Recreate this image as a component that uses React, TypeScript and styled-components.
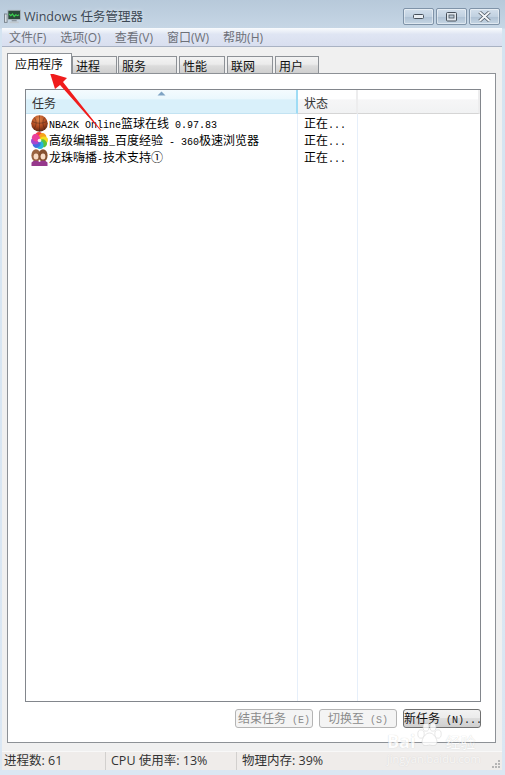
import React from "react";
import styled, { createGlobalStyle } from "styled-components";

const CJK = `"Noto Sans CJK SC", sans-serif`;
const UI = `"Open Sans", "Noto Sans CJK SC", sans-serif`;
const MONO = `"Liberation Mono", monospace`;

const GlobalStyle = createGlobalStyle`
  html, body { margin: 0; padding: 0; background: #d5e3f0; }
  * { box-sizing: border-box; }
`;

const Frame = styled.div`
  position: relative;
  width: 505px;
  height: 775px;
  overflow: hidden;
  display: flex;
  flex-direction: column;
  background: linear-gradient(180deg, #b7c9da 0, #c6d6e5 28px, #d5e4f1 29px, #dbe7f3 100%);
  font-family: ${UI};
`;

const TitleBar = styled.div`
  height: 28px;
  flex: none;
  display: flex;
  align-items: center;
  padding: 0 5px 0 4px;
`;

const TitleText = styled.div`
  margin-left: 3px;
  margin-top: 3px;
  font-size: 12.5px;
  color: #3c4854;
  flex: 1;
  text-shadow: 0 0 4px rgba(255, 255, 255, 0.6);
`;

const Controls = styled.div`
  display: flex;
  gap: 2px;
  margin-top: 5px;
`;

const ControlButton = styled.div`
  width: 31px;
  height: 17px;
  border: 1px solid #7f93a8;
  border-radius: 2px;
  display: flex;
  align-items: center;
  justify-content: center;
  background: linear-gradient(180deg, #d3dfeb 0, #c1d1e1 50%, #adc0d3 51%, #c6d6e4 100%);
  box-shadow: inset 0 0 0 1px rgba(255, 255, 255, 0.45);
`;

const Client = styled.div`
  flex: 1;
  margin: 0 3px 5px 2px;
  display: flex;
  flex-direction: column;
  background: #f0f0f0;
  min-height: 0;
`;

const MenuBar = styled.div`
  height: 19px;
  flex: none;
  display: flex;
  gap: 14px;
  padding: 1px 0 0 7px;
  background: linear-gradient(180deg, #f9fbfd 0, #dfe5f3 35%, #d9dfef 100%);
  border-bottom: 1px solid #a9b2c3;
  font-size: 12px;
  color: #6d7078;
`;

const MenuItem = styled.span`
  line-height: 17px;
  white-space: nowrap;
`;

const TabStrip = styled.div`
  height: 27px;
  flex: none;
  display: flex;
  align-items: flex-end;
  padding-left: 5px;
  position: relative;
  z-index: 1;
  margin-bottom: -1px;
`;

const Tab = styled.div<{ $active?: boolean; $width: number; $gap?: number }>`
  width: ${(p) => p.$width}px;
  margin-right: ${(p) => p.$gap ?? 2}px;
  height: ${(p) => (p.$active ? 21 : 18)}px;
  border: 1px solid #8d9196;
  border-bottom: ${(p) => (p.$active ? "none" : "1px solid #8d9196")};
  background: ${(p) =>
    p.$active ? "#fff" : "linear-gradient(180deg, #f3f3f3 0, #ebebeb 45%, #dcdcdc 55%, #cfcfcf 100%)"};
  font-family: ${CJK};
  font-size: 12px;
  line-height: ${(p) => (p.$active ? 19 : 17)}px;
  padding-left: ${(p) => (p.$active ? 7 : 3)}px;
  color: #111;
  white-space: nowrap;
`;

const Panel = styled.div`
  flex: 1;
  margin: 0 6px 8px 5px;
  border: 1px solid #8d9196;
  background: #fff;
  display: flex;
  flex-direction: column;
  padding: 15px 14px 14px 17px;
  min-height: 0;
`;

const TaskList = styled.div`
  flex: 1;
  border: 1px solid #82868c;
  display: flex;
  padding-right: 1px;
  min-height: 0;
`;

const Column = styled.div<{ $width?: number; $grow?: boolean }>`
  width: ${(p) => (p.$width ? `${p.$width}px` : "auto")};
  flex: ${(p) => (p.$grow ? 1 : "none")};
  display: flex;
  flex-direction: column;
  border-right: ${(p) => (p.$grow ? "none" : "1px solid #e6effa")};
`;

const HeaderCell = styled.div<{ $sorted?: boolean; $pad: number }>`
  position: relative;
  height: 24px;
  flex: none;
  margin-right: -1px;
  padding: 5px 0 0 ${(p) => p.$pad}px;
  font-family: ${CJK};
  font-size: 12px;
  line-height: 16px;
  color: #333;
  background: ${(p) =>
    p.$sorted
      ? "linear-gradient(180deg, #f4fbfe 0, #eaf7fd 40%, #d9f0fa 42%, #d9f0fa 100%)"
      : "linear-gradient(180deg, #fff 0, #fff 40%, #f6f6f7 42%, #f1f2f3 100%)"};
  border-bottom: 1px solid ${(p) => (p.$sorted ? "#c3e3f2" : "#d5d5d5")};
  border-right: 2px solid ${(p) => (p.$sorted ? "#9fdcf5" : "#ededee")};
`;

const SortArrow = styled.svg`
  position: absolute;
  top: 1px;
  left: 131px;
`;

const Cell = styled.div<{ $pad: number }>`
  height: 17px;
  flex: none;
  display: flex;
  align-items: center;
  gap: 1px;
  padding-left: ${(p) => p.$pad}px;
  font-family: ${CJK};
  font-size: 12px;
  color: #000;
  white-space: pre;
`;

const CellText = styled.span`
  margin-top: -2px;
`;

const Rows = styled.div`
  padding-top: 1px;
`;

/* the latin part of the old bitmap font is half as wide as a hanzi */
const Latin = styled.span`
  font-family: ${MONO};
  font-size: 10px;
`;

const ButtonRow = styled.div`
  flex: none;
  display: flex;
  justify-content: flex-end;
  gap: 6px;
  margin-top: 7px;
`;

const ActionButton = styled.div<{ $disabled?: boolean }>`
  width: 78px;
  height: 19px;
  border: 1px solid ${(p) => (p.$disabled ? "#b4b4b4" : "#707070")};
  border-radius: 3px;
  background: ${(p) =>
    p.$disabled ? "#f4f4f4" : "linear-gradient(180deg, #f2f2f2 0, #ebebeb 48%, #dddddd 50%, #cfcfcf 100%)"};
  color: ${(p) => (p.$disabled ? "#8b8b8b" : "#111")};
  font-family: ${CJK};
  font-size: 12px;
  line-height: 15px;
  text-align: center;
  white-space: pre;
`;

const StatusBar = styled.div`
  height: 19px;
  flex: none;
  display: flex;
  background: #efecea;
  border-top: 1px solid #f8f8f8;
  font-size: 12.5px;
  line-height: 18px;
  color: #333;
`;

const StatusCell = styled.div<{ $width?: number; $pad: number }>`
  width: ${(p) => (p.$width ? `${p.$width}px` : "auto")};
  flex: ${(p) => (p.$width ? "none" : 1)};
  padding-left: ${(p) => p.$pad}px;
  border-right: ${(p) => (p.$width ? "1px solid #d2d0ce" : "none")};
  white-space: nowrap;
`;

const Grip = styled.svg`
  position: absolute;
  right: 4px;
  bottom: 6px;
`;

const Arrow = styled.svg`
  position: absolute;
  left: 45px;
  top: 68px;
  pointer-events: none;
`;

const Watermark = styled.div`
  position: absolute;
  left: 387px;
  top: 733px;
  width: 110px;
  color: #fff;
  pointer-events: none;
  text-shadow: 0 0 1px #c4c4c4;
  opacity: 0.8;
`;

const WatermarkMain = styled.div`
  display: flex;
  align-items: center;
  height: 17px;
  font-family: ${UI};
  font-weight: 700;
  font-size: 18px;
  line-height: 17px;
`;

const PawSlot = styled.svg`
  margin: -14px 1px 0 -1px;
`;

const WatermarkCjk = styled.span`
  font-family: ${CJK};
  font-size: 15px;
  font-weight: 400;
`;

const WatermarkSub = styled.div`
  font-family: ${UI};
  font-size: 11px;
  line-height: 12px;
  margin-top: 3px;
  opacity: 0.75;
`;

const IconSlot = styled.svg`
  flex: none;
`;

const TitleIcon = styled.svg`
  flex: none;
  margin-top: 4px;
`;

const AppIcon = () => (
  <TitleIcon width="17" height="15" viewBox="0 0 20 18">
    <rect x="0.5" y="6" width="3" height="10" fill="#d8dee3" stroke="#6f7a83" />
    <rect x="4.5" y="1.5" width="15" height="11" fill="#2b4a3a" stroke="#aeb7be" />
    <path d="M6 6 L8 8 L10 6 L12 9 L14 7 L16 8 L18 7" fill="none" stroke="#3bd050" strokeWidth="1.4" />
    <rect x="9" y="13" width="6" height="2" fill="#8c969e" />
    <rect x="6.5" y="15" width="11" height="2" fill="#c0c8ce" />
  </TitleIcon>
);

const Ball = () => (
  <IconSlot width="17" height="17" viewBox="0 0 17 17">
    <defs>
      <radialGradient id="ball" cx="45%" cy="25%" r="80%">
        <stop offset="0" stopColor="#e0854a" />
        <stop offset="0.55" stopColor="#b04a20" />
        <stop offset="1" stopColor="#4e2010" />
      </radialGradient>
    </defs>
    <circle cx="8.5" cy="8.5" r="8.3" fill="url(#ball)" />
    <path d="M1 6.5 Q8.5 10 16 6.5 M8.5 0.6 V16.4 M3.5 2.5 Q7 8.5 3 14 M13.5 2.5 Q10 8.5 14 14" fill="none" stroke="#3a2018" strokeWidth="0.7" opacity="0.6" />
  </IconSlot>
);

const petals = ["#f0433a", "#f7a21c", "#f5dc1f", "#59c43b", "#27b6d8", "#3f6fe0", "#a347d0", "#ea3f9a"];

const Pinwheel = () => (
  <IconSlot width="17" height="17" viewBox="0 0 17 17">
    {petals.map((color, i) => (
      <ellipse key={color} cx="8" cy="4" rx="3.6" ry="4" fill={color} transform={`rotate(${i * 45} 8.5 8.5)`} />
    ))}
    <circle cx="8.5" cy="8.5" r="1.8" fill="#f6f0f4" />
  </IconSlot>
);

const Girls = () => (
  <IconSlot width="17" height="17" viewBox="0 0 17 17">
    <ellipse cx="5" cy="6.5" rx="4.6" ry="6.2" fill="#9a6440" />
    <ellipse cx="12" cy="6.5" rx="4.6" ry="6.2" fill="#86512f" />
    <ellipse cx="5" cy="7.6" rx="2.4" ry="3" fill="#f8dcc6" />
    <ellipse cx="12" cy="7.6" rx="2.4" ry="3" fill="#f8dcc6" />
    <path d="M0.5 17 V13.5 Q2 11.5 5 11.5 Q7.5 11.5 8.5 13 Q9.5 11.5 12 11.5 Q15 11.5 16.5 13.5 V17 Z" fill="#96388c" />
  </IconSlot>
);

const Paw = () => (
  <PawSlot width="30" height="26" viewBox="0 0 30 26" fill="#fff" stroke="#cfcfcf" strokeWidth="0.6">
    <ellipse cx="7" cy="12" rx="3.2" ry="4.2" />
    <ellipse cx="12" cy="5" rx="3" ry="4.2" />
    <ellipse cx="19" cy="5" rx="3" ry="4.2" />
    <ellipse cx="24" cy="12" rx="3.2" ry="4.2" />
    <path d="M15.5 11 C11 11 8 17 8 20 C8 24 12 24 15.5 23 C19 24 23 24 23 20 C23 17 20 11 15.5 11 Z" />
  </PawSlot>
);

// splits a label so the ascii runs get the narrow latin font
const Mixed = ({ text }: { text: string }) => (
  <>
    {text.split(/([\x20-\x7e]+)/).map((part, i) =>
      i % 2 ? <Latin key={i}>{part}</Latin> : part
    )}
  </>
);

const tabs = [
  { label: "进程", width: 45, gap: 1 },
  { label: "服务", width: 59, gap: 2 },
  { label: "性能", width: 46, gap: 2 },
  { label: "联网", width: 46, gap: 2 },
  { label: "用户", width: 44, gap: 0 },
];

const menus = ["文件(F)", "选项(O)", "查看(V)", "窗口(W)", "帮助(H)"];

const tasks = [
  { icon: <Ball />, name: "NBA2K Online篮球在线 0.97.83" },
  { icon: <Pinwheel />, name: "高级编辑器_百度经验 - 360极速浏览器" },
  { icon: <Girls />, name: "龙珠嗨播-技术支持①" },
];

export default function App() {
  return (
    <Frame>
      <GlobalStyle />
      <TitleBar>
        <AppIcon />
        <TitleText>Windows 任务管理器</TitleText>
        <Controls>
          <ControlButton>
            <svg width="12" height="7" viewBox="0 0 12 7">
              <rect x="0.5" y="1.5" width="10" height="4" rx="1" fill="#e9eef3" stroke="#47505a" />
            </svg>
          </ControlButton>
          <ControlButton>
            <svg width="11" height="10" viewBox="0 0 11 10">
              <rect x="0.5" y="0.5" width="10" height="8.5" rx="1" fill="#dfe6ed" stroke="#47505a" />
              <rect x="3" y="3" width="5" height="3" fill="#b9c8d6" stroke="#47505a" strokeWidth="0.8" />
            </svg>
          </ControlButton>
          <ControlButton>
            <svg width="13" height="11" viewBox="0 0 13 11">
              <path d="M1.5 1 L11.5 10 M11.5 1 L1.5 10" stroke="#4a535d" strokeWidth="3.4" />
              <path d="M1.5 1 L11.5 10 M11.5 1 L1.5 10" stroke="#f2f5f8" strokeWidth="2" />
            </svg>
          </ControlButton>
        </Controls>
      </TitleBar>
      <Client>
        <MenuBar>
          {menus.map((m) => (
            <MenuItem key={m}>{m}</MenuItem>
          ))}
        </MenuBar>
        <TabStrip>
          <Tab $active $width={65} $gap={0}>应用程序</Tab>
          {tabs.map((t) => (
            <Tab key={t.label} $width={t.width} $gap={t.gap}>{t.label}</Tab>
          ))}
        </TabStrip>
        <Panel>
          <TaskList>
            <Column $width={272}>
              <HeaderCell $sorted $pad={6}>
                任务
                <SortArrow width="9" height="5" viewBox="0 0 9 5">
                  <path d="M0.5 4.5 L4.5 0.5 L8.5 4.5 Z" fill="#7fa3c4" />
                </SortArrow>
              </HeaderCell>
              <Rows>
                {tasks.map((t) => (
                  <Cell key={t.name} $pad={5}>
                    {t.icon}
                    <CellText><Mixed text={t.name} /></CellText>
                  </Cell>
                ))}
              </Rows>
            </Column>
            <Column $width={60}>
              <HeaderCell $pad={6}>状态</HeaderCell>
              <Rows>
                {tasks.map((t) => (
                  <Cell key={t.name} $pad={6}>
                    <CellText><Mixed text="正在..." /></CellText>
                  </Cell>
                ))}
              </Rows>
            </Column>
            <Column $grow>
              <HeaderCell $pad={0} />
            </Column>
          </TaskList>
          <ButtonRow>
            <ActionButton $disabled><Mixed text="结束任务 (E)" /></ActionButton>
            <ActionButton $disabled><Mixed text="切换至 (S)" /></ActionButton>
            <ActionButton><Mixed text="新任务 (N)..." /></ActionButton>
          </ButtonRow>
        </Panel>
        <StatusBar>
          <StatusCell $width={104} $pad={2}>进程数: 61</StatusCell>
          <StatusCell $width={131} $pad={5}>CPU 使用率: 13%</StatusCell>
          <StatusCell $pad={5}>物理内存: 39%</StatusCell>
        </StatusBar>
      </Client>
      <Grip width="10" height="10" viewBox="0 0 10 10" fill="#b5b5b5">
        <rect x="7" y="1" width="2" height="2" />
        <rect x="4" y="4" width="2" height="2" />
        <rect x="7" y="4" width="2" height="2" />
        <rect x="1" y="7" width="2" height="2" />
        <rect x="4" y="7" width="2" height="2" />
        <rect x="7" y="7" width="2" height="2" />
      </Grip>
      <Arrow width="62" height="66" viewBox="0 0 62 66">
        <path d="M5 5 L22 10 L18 14 L56 62 L55.5 62.5 L15 17 L10 21 Z" fill="#f01c1c" />
      </Arrow>
      <Watermark>
        <WatermarkMain>
          Bai
          <Paw />
          <WatermarkCjk>经验</WatermarkCjk>
        </WatermarkMain>
        <WatermarkSub>jingyan.baidu.com</WatermarkSub>
      </Watermark>
    </Frame>
  );
}
